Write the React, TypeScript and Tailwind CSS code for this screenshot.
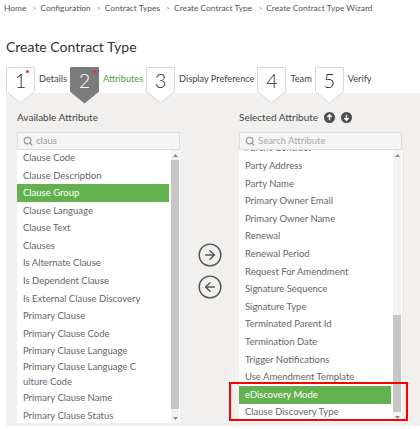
import React from 'react';
import { ArrowRightCircle, ArrowLeftCircle, Search } from 'lucide-react';

const available = [
  'Clause Code',
  'Clause Description',
  'Clause Group',
  'Clause Language',
  'Clause Text',
  'Clauses',
  'Is Alternate Clause',
  'Is Dependent Clause',
  'Is External Clause Discovery',
  'Primary Clause',
  'Primary Clause Code',
  'Primary Clause Language',
];

const selected = [
  'Parent Contract',
  'Party Address',
  'Party Name',
  'Primary Owner Email',
  'Primary Owner Name',
  'Renewal',
  'Renewal Period',
  'Request For Amendment',
  'Signature Sequence',
  'Signature Type',
  'Terminated Parent Id',
  'Termination Date',
  'Trigger Notifications',
  'Use Amendment Template',
  'eDiscovery Mode',
  'Clause Discovery Type',
];

const steps = [
  { n: '1', label: 'Details', req: true, active: false },
  { n: '2', label: 'Attributes', req: true, active: true },
  { n: '3', label: 'Display Preference', req: false, active: false },
  { n: '4', label: 'Team', req: false, active: false },
  { n: '5', label: 'Verify', req: false, active: false },
];

const crumbs = ['Home', 'Configuration', 'Contract Types', 'Create Contract Type', 'Create Contract Type Wizard'];

const Item = ({ label, active }: { label: React.ReactNode; active?: boolean }) => (
  <div className={`h-[17.6px] pl-[6px] flex items-center whitespace-nowrap ${active ? 'bg-[#64b150] text-white' : 'text-[#666]'}`}>
    {label}
  </div>
);

const ScrollArrow = ({ down }: { down?: boolean }) => (
  <div className="h-[10px] flex items-center justify-center">
    <svg width="5" height="3" viewBox="0 0 5 3">
      {down ? <polygon points="0,0 5,0 2.5,3" fill="#8a8a8a" /> : <polygon points="0,3 5,3 2.5,0" fill="#8a8a8a" />}
    </svg>
  </div>
);

const StepBox = ({ n, req, active }: { n: string; req: boolean; active: boolean }) => (
  <div className="relative w-[29px] h-[26px] shrink-0">
    <svg className="absolute top-0 left-0" width="29" height="37" viewBox="0 0 29 37">
      <polygon
        points="0.5,0.5 28.5,0.5 28.5,24.5 14.5,36 0.5,24.5"
        fill={active ? '#7b7b7b' : '#ffffff'}
        stroke={active ? '#7b7b7b' : '#d8d8d8'}
      />
    </svg>
    <div className={`absolute top-0 left-0 w-[29px] h-[25px] flex items-center justify-center text-[20px] font-light ${active ? 'text-white' : 'text-[#333]'}`}>
      {n}
    </div>
    {req && (
      <span className={`absolute top-[3px] w-[3px] h-[3px] rounded-full bg-[#e8312f] ${n === '1' ? 'left-[20px]' : 'left-[23px]'}`} />
    )}
  </div>
);

const App: React.FC = () => {
  return (
    <div className="w-[420px] h-[429px] relative bg-white overflow-hidden font-['Lato','Open_Sans',sans-serif]">
      {/* breadcrumb */}
      <nav className="h-[16px] pl-[4px] pt-[1px] flex items-center text-[8.4px] text-[#555] whitespace-nowrap">
        {crumbs.map((c, i) => (
          <React.Fragment key={c}>
            {i > 0 && <span className="ml-[6px] mr-[4px] text-[7px] text-[#999]">&gt;</span>}
            <span className="shrink-0">{c}</span>
          </React.Fragment>
        ))}
      </nav>

      <h1 className="mt-[21px] pl-[6px] h-[20px] leading-[20px] text-[14px] text-[#333]">Create Contract Type</h1>

      {/* wizard steps */}
      <div className="mt-[10px] ml-[6px] h-[26px] flex items-start relative z-10">
        {steps.map((s) => (
          <React.Fragment key={s.n}>
            <StepBox n={s.n} req={s.req} active={s.active} />
            <span className={`ml-[4px] mr-[3px] leading-[24px] text-[9.2px] whitespace-nowrap ${s.active ? 'text-[#4fa23c]' : 'text-[#444]'}`}>
              {s.label}
            </span>
          </React.Fragment>
        ))}
      </div>

      {/* panel */}
      <div className="ml-[6px] h-[333px] bg-[#f1f0ef] pt-[17px] pl-[11px] flex text-[9.5px]">
        {/* available */}
        <div className="w-[163px] flex flex-col">
          <div className="h-[14px] leading-[14px] text-[10px] text-[#444]">Available Attribute</div>
          <div className="mt-[8px] h-[18px] bg-[#f5f5f5] border border-[#dedede] flex items-center pl-[5px] gap-[3px]">
            <Search size={10} strokeWidth={3} className="text-[#9a9a9a]" />
            <span className="text-[#999]">claus</span>
          </div>
          <div className="h-[273px] bg-white flex overflow-hidden">
            <div className="w-[152px] -mt-[0.75px]">
              {available.map((a) => (
                <Item key={a} label={a} active={a === 'Clause Group'} />
              ))}
              <div className="h-[29px] pl-[6px] leading-[14.5px] text-[#666]">
                Primary Clause Language C<br />ulture Code
              </div>
              <Item label="Primary Clause Name" />
              <Item label="Primary Clause Status" />
            </div>
            <div className="ml-[2px] w-[8px] flex flex-col bg-[#f3f3f3]">
              <ScrollArrow />
              <div className="h-[249px] bg-[#c6c6c6]" />
              <div className="flex-1" />
              <ScrollArrow down />
            </div>
          </div>
        </div>

        {/* move buttons */}
        <div className="w-[59px] pt-[132px] flex flex-col items-center gap-[6px]">
          <ArrowRightCircle size={26} strokeWidth={1.3} className="text-[#555]" />
          <ArrowLeftCircle size={26} strokeWidth={1.3} className="text-[#555]" />
        </div>

        {/* selected */}
        <div className="w-[163px] flex flex-col">
          <div className="h-[14px] leading-[14px] text-[10px] text-[#444] flex items-center">
            <span>Selected Attribute</span>
            <svg className="ml-[6px]" width="11" height="11" viewBox="0 0 12 12">
              <circle cx="6" cy="6" r="6" fill="#4d4d4d" />
              <path d="M6 9V3.2M3.6 5.5L6 3.1L8.4 5.5" stroke="#fff" strokeWidth="1.5" fill="none" />
            </svg>
            <svg className="ml-[6px]" width="11" height="11" viewBox="0 0 12 12">
              <circle cx="6" cy="6" r="6" fill="#4d4d4d" />
              <path d="M6 3V8.8M3.6 6.5L6 8.9L8.4 6.5" stroke="#fff" strokeWidth="1.5" fill="none" />
            </svg>
          </div>
          <div className="mt-[8px] h-[18px] bg-[#f5f5f5] border border-[#dedede] flex items-center pl-[5px] gap-[3px] relative z-10">
            <Search size={10} strokeWidth={3} className="text-[#9a9a9a]" />
            <span className="text-[#aaa]">Search Attribute</span>
          </div>
          <div className="h-[272px] bg-white flex overflow-hidden">
            <div className="w-[152px] -mt-[10.25px]">
              {selected.map((a) => (
                <Item key={a} label={a} active={a === 'eDiscovery Mode'} />
              ))}
            </div>
            <div className="ml-[2px] w-[8px] flex flex-col bg-[#f3f3f3]">
              <ScrollArrow />
              <div className="h-[155px]" />
              <div className="h-[97px] bg-[#c6c6c6]" />
              <div className="flex-1" />
              <ScrollArrow down />
            </div>
          </div>
        </div>
      </div>

      {/* highlight frame */}
      <div className="absolute left-[229px] top-[382px] w-[179px] h-[39px] border-2 border-[#ff0000]" />
    </div>
  );
};

export default App;
